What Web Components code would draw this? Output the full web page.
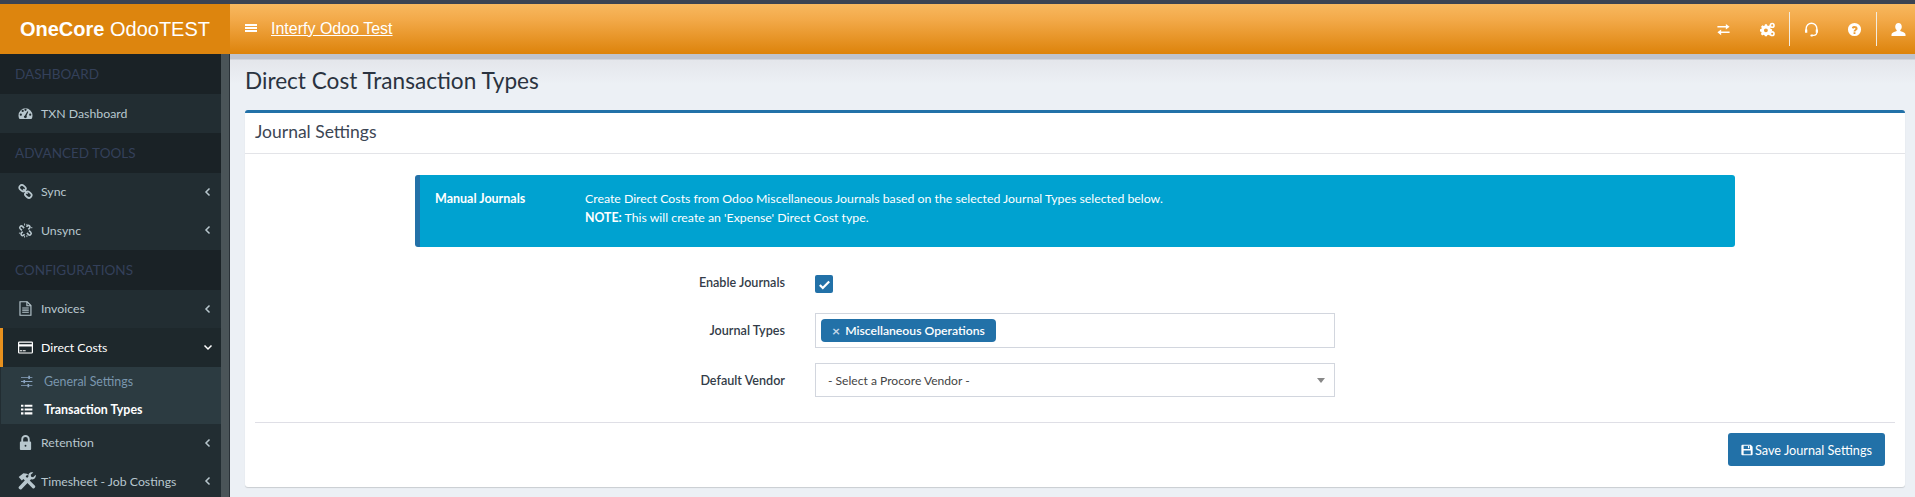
<!DOCTYPE html>
<html>
<head>
<meta charset="utf-8">
<title>Direct Cost Transaction Types</title>
<style>
html, body { margin: 0; height: 100%; overflow: hidden; background: #ecf0f5; }
body { font-family: Lato, "Noto Sans", sans-serif; }
</style>
</head>
<body>
<app-shell>
    <top-bar slot="top"></top-bar>
    <side-bar slot="side">
        <nav-head>DASHBOARD</nav-head>
        <nav-item icon="gauge" h="39">TXN Dashboard</nav-item>
        <nav-head>ADVANCED TOOLS</nav-head>
        <nav-item icon="link" arrow="left" h="38">Sync</nav-item>
        <nav-item icon="unlink" arrow="left" h="39">Unsync</nav-item>
        <nav-head>CONFIGURATIONS</nav-head>
        <nav-item icon="file" arrow="left" h="38">Invoices</nav-item>
        <nav-item icon="card" arrow="down" h="39" active>Direct Costs</nav-item>
        <nav-sub icon="sliders">General Settings</nav-sub>
        <nav-sub icon="list" current>Transaction Types</nav-sub>
        <nav-item icon="lock" arrow="left" h="38">Retention</nav-item>
        <nav-item icon="tools" size="18" arrow="left" h="39">Timesheet - Job Costings</nav-item>
    </side-bar>
    <page-title>Direct Cost Transaction Types</page-title>
    <settings-box heading="Journal Settings">
        <call-out heading="Manual Journals">
            Create Direct Costs from Odoo Miscellaneous Journals based on the selected Journal Types selected below.<br>
            <b>NOTE:</b> This will create an 'Expense' Direct Cost type.
        </call-out>
        <form-row label="Enable Journals" h="32"><check-box></check-box></form-row>
        <form-row label="Journal Types" h="35"><tag-input>Miscellaneous Operations</tag-input></form-row>
        <form-row label="Default Vendor" h="34"><select-input>- Select a Procore Vendor -</select-input></form-row>
        <save-button slot="footer">Save Journal Settings</save-button>
    </settings-box>
</app-shell>

<script>
const ICONS = {
    bars: '<path d="M2 4h12v2H2zM2 7h12v2H2zM2 10h12v2H2z" fill="currentColor"/>',
    gauge: '<path fill="currentColor" fill-rule="evenodd" d="M8 2.500a7.500 7.500 0 0 0-7.500 7.500c0 1.500.4 2.800 1.100 3.900h12.800c.7-1.100 1.100-2.400 1.100-3.900A7.500 7.500 0 0 0 8 2.500zM3 10.500a1.200 1.200 0 1 1 0-2.400 1.200 1.200 0 0 1 0 2.400zM5 6.500a1.200 1.200 0 1 1 0-2.400 1.200 1.200 0 0 1 0 2.400zM8 5.300a1.200 1.200 0 1 1 0-2.400 1.200 1.200 0 0 1 0 2.400zM13 10.500a1.200 1.200 0 1 1 0-2.400 1.200 1.200 0 0 1 0 2.400zM9.400 11.500a1.600 1.600 0 0 1-3 .6 1.600 1.600 0 0 1 1-2.100l2.600-4.500 1 .5-1.900 4.500c.2.500.4.900.3 1z"/>',
    link: '<g fill="none" stroke="currentColor" stroke-width="1.900"><rect x="1.200" y="1.600" width="7.200" height="5.600" rx="2.600" transform="rotate(42 4.800 4.400)"/><rect x="7.400" y="8.600" width="7.200" height="5.600" rx="2.600" transform="rotate(42 11 11.400)"/><path d="M5.600 5.400l4.600 5"/></g>',
    unlink: '<g fill="none" stroke="currentColor" stroke-width="1.700"><path d="M6.500 5.500L4.800 3.600c-1.700-1.500-3.900.9-2.400 2.500l1.800 1.700M9.500 10.500l1.700 1.900c1.700 1.500 3.900-.9 2.400-2.500L11.800 8.200M5 9.200l-1.400 1.500c-1.200 1.600.8 3.500 2.300 2.300L7 12M11 6.800l1.400-1.500c1.200-1.600-.8-3.500-2.300-2.300L9 4"/><path d="M7 .5v2.200M9.500 1v1.800M1 10.800h1.500M13.500 5h1.800M7 13.500v2M9.500 13v2" stroke-width="1"/></g>',
    file: '<g fill="none" stroke="currentColor" stroke-width="1.200"><path d="M2.100.8h7.700l4 4v10.400H2.100z"/><path d="M9.500.8v4.300h4.300M4.500 7.500h7M4.500 9.700h7M4.500 12h7"/></g>',
    card: '<path fill="currentColor" fill-rule="evenodd" d="M1.500 1.500h13a1.500 1.500 0 0 1 1.500 1.500v10a1.500 1.500 0 0 1-1.500 1.500h-13A1.500 1.500 0 0 1 0 13V3a1.500 1.500 0 0 1 1.500-1.500zM1.300 4.500h13.400V3q0-.2-.2-.2h-13q-.2 0-.2.200zM1.300 7v6q0 .2.2.2h13q.2 0 .2-.2V7zM2 11h2.500v1H2zM5.200 11h3v1h-3z"/>',
    sliders: '<path fill="currentColor" d="M0 2.500h9V1h2v1.500h3v1h-3V5H9V3.500H0zM0 7.500h3V6h2v1.500h9v1H5V10H3V8.500H0zM0 12.500h8V11h2v1.500h4v1h-4V15H8v-1.500H0z"/>',
    list: '<path fill="currentColor" d="M0 2h3v2.600H0zM4.500 2H14v2.600H4.500zM0 6.700h3v2.600H0zM4.500 6.700H14v2.600H4.500zM0 11.400h3V14H0zM4.500 11.400H14V14H4.500z"/>',
    lock: '<path fill="currentColor" fill-rule="evenodd" d="M3.500 7V4.500a4.500 4.500 0 0 1 9 0V7h.500A1 1 0 0 1 14 8v7a1 1 0 0 1-1 1H3a1 1 0 0 1-1-1V8a1 1 0 0 1 1-1zM5.500 7h5V4.500a2.500 2.500 0 0 0-5 0z"/><circle cx="8" cy="11.500" r="1" fill="#222d32"/>',
    tools: '<g fill="currentColor"><path d="M.6 4.500L4.800 1l3.200.5 1.400 1.100-1.700.2-.9 1.200 8.300 8.300q.6.700 0 1.400l-.7.700q-.7.600-1.400 0L4.800 6.300 3.400 7.500z"/><path d="M15.800 2.500l-2.400 2.200-1.700-.5-.4-1.700L13.600.4c-1.300-.5-2.900-.1-3.800 1-.6.800-.8 1.700-.5 2.700L.8 13.100q-.6.800 0 1.500l.8.800q.8.500 1.500-.1l8.500-8.800c1 .3 2 .1 2.900-.6 1.100-.9 1.600-2.400 1.300-3.400z"/></g>',
    exchange: '<path fill="currentColor" d="M1.500 4.200h9V2l4 3-4 3V5.800h-9zM14.500 10.200h-9V8l-4 3 4 3v-2.200h9z"/>',
    gears: '<g fill="currentColor"><path fill-rule="evenodd" d="M5.200 3.500h2.200l.3 1.500 1.200.5 1.300-.8 1.500 1.500-.8 1.300.5 1.200 1.500.3v2.200l-1.500.3-.5 1.200.8 1.300-1.500 1.500-1.300-.8-1.200.5-.3 1.300H5.200l-.3-1.300-1.200-.5-1.300.8-1.500-1.500.8-1.300-.5-1.200L0 11.200V9l1.400-.3.5-1.200-.8-1.300 1.500-1.500 1.300.8 1.200-.5zM6.300 8a2.100 2.100 0 1 0 0 4.200 2.100 2.100 0 0 0 0-4.200z" transform="translate(0 -1.200)"/><path fill-rule="evenodd" d="M13 .8a2.800 2.800 0 1 0 0 5.600 2.800 2.800 0 0 0 0-5.600zm0 1.700a1.100 1.100 0 1 1 0 2.200 1.100 1.100 0 0 1 0-2.200z"/><path fill-rule="evenodd" d="M13 10.500a2.800 2.800 0 1 0 0 5.600 2.800 2.800 0 0 0 0-5.600zm0 1.700a1.100 1.100 0 1 1 0 2.200 1.100 1.100 0 0 1 0-2.200z" transform="translate(0 -.8)"/></g>',
    headset: '<g fill="none" stroke="currentColor"><path d="M2.300 10V7a5.700 5.700 0 0 1 11.400 0V10" stroke-width="1.500"/><path d="M2.300 8v3.500M13.700 8v3.500" stroke-width="2.400"/><path d="M13.700 11c0 2-1.500 3.300-3.500 3.300H8.500" stroke-width="1.300"/></g><rect x="6.800" y="13.200" width="2.800" height="2.200" rx=".8" fill="currentColor"/>',
    help: '<path fill="currentColor" fill-rule="evenodd" d="M8 1a7 7 0 1 1 0 14A7 7 0 0 1 8 1zM7 11v1.800h2V11zM5.300 6.400l1.500.9c.2-.6.600-1 1.200-1 .6 0 1 .3 1 .8 0 .9-2 1-2 2.900h2c0-1 2.300-1.200 2.300-3.200 0-1.700-1.500-2.600-3.200-2.600-1.300 0-2.200.6-2.800 1.200z"/>',
    user: '<path fill="currentColor" d="M8 1c2.100 0 3.500 1.800 3.500 4 0 1.500-.7 2.800-1.600 3.500-.2.900.2 1.200 1.300 1.600 2.200.8 4.300 1.400 4.300 3.400v1.500H.5v-1.500c0-2 2.100-2.600 4.300-3.400 1.100-.4 1.500-.7 1.300-1.600C5.200 7.800 4.500 6.500 4.500 5c0-2.200 1.400-4 3.500-4z"/>',
    save: '<path fill="currentColor" fill-rule="evenodd" d="M1.500 1h11L15 3.500v10a1.500 1.500 0 0 1-1.500 1.500h-12A1.500 1.500 0 0 1 0 13.500v-11A1.500 1.500 0 0 1 1.500 1zM3 2.200v4.300h8.500V2.200zM8.800 2.800h1.700v3H8.800zM3 8.500v5.300h9.500V8.500z" transform="translate(.5 0)"/>',
    check: '<path d="M3 8.500l3.200 3.200L13 4.800" fill="none" stroke="currentColor" stroke-width="2.400"/>'
};

const icon = (name, size) => `<svg width="${size}" height="${size}" viewBox="0 0 16 16" aria-hidden="true">${ICONS[name]}</svg>`;

class AppShell extends HTMLElement {
    constructor() {
        super();
        this.attachShadow({ mode: 'open' });
        this.shadowRoot.innerHTML = `
            <style>
                :host { display: grid; grid-template: 54px 1fr / 230px 1fr; height: 497px; overflow: hidden; }
                .top { grid-column: 1 / 3; }
                .main { padding: 0 10px 0 15px; background: linear-gradient(#bfc3ce 0, #bfc3ce 5px, #e4e6eb 6px, #ecf0f5 30px); min-width: 0; }
            </style>
            <div class="top"><slot name="top"></slot></div>
            <slot name="side"></slot>
            <div class="main"><slot></slot></div>
        `;
    }
}

class TopBar extends HTMLElement {
    constructor() {
        super();
        this.attachShadow({ mode: 'open' });
        const tool = (n, w, sep, extra) => `<span class="tool ${sep ? 'sep' : ''}" style="width:${w}px;${extra || ''}">${icon(n, 15)}</span>`;
        this.shadowRoot.innerHTML = `
            <style>
                :host { display: block; height: 54px; background: #3b4352; padding-top: 4px; box-sizing: border-box; font-family: "Liberation Sans", sans-serif; color: #fff; }
                .bar { display: flex; height: 50px; background: linear-gradient(#f8b85f, #f3aa4a 30%, #dd830b); }
                .logo { width: 230px; background: #dd850e; font-size: 20px; line-height: 50px; text-align: center; box-sizing: border-box; flex: none; }
                .logo b { font-weight: 700; }
                .burger { display: flex; align-items: center; padding: 0 11px 0 13px; width: 17px; box-sizing: content-box; margin-top: -2px; }
                a { color: #fff; font-size: 16px; line-height: 50px; }
                .tools { margin-left: auto; display: flex; height: 34px; align-self: center; }
                .tool { display: flex; align-items: center; justify-content: center; box-sizing: border-box; }
                .sep { border-right: 1px solid #f3ecdf; }
            </style>
            <div class="bar">
                <div class="logo"><b>OneCore</b> OdooTEST</div>
                <span class="burger">${icon('bars', 16)}</span>
                <a href="#" onclick="return false">Interfy Odoo Test</a>
                <div class="tools">
                    ${tool('exchange', 44)}${tool('gears', 45, true)}${tool('headset', 43)}${tool('help', 43)}<span class="tool sep" style="width:1px"></span>${tool('user', 38, false, 'padding-left:4px')}
                </div>
            </div>
        `;
    }
}

class SideBar extends HTMLElement {
    constructor() {
        super();
        this.attachShadow({ mode: 'open' });
        this.shadowRoot.innerHTML = `
            <style>
                :host { display: flex; background: #222d32; border-right: 1px solid #2a3238; box-sizing: border-box; overflow: hidden; }
                .menu { flex: 1; min-width: 0; }
                .scroll { width: 8px; flex: none; background: #4a5458; }
            </style>
            <div class="menu"><slot></slot></div>
            <div class="scroll"></div>
        `;
    }
}

class NavHead extends HTMLElement {
    constructor() {
        super();
        this.attachShadow({ mode: 'open' });
        this.shadowRoot.innerHTML = `
            <style>
                :host { display: block; height: 40px; line-height: 40px; padding-left: 15px; background: #1a2226; color: #34405a; font-size: 13.500px; }
            </style>
            <slot></slot>
        `;
    }
}

class NavItem extends HTMLElement {
    constructor() {
        super();
        this.attachShadow({ mode: 'open' });
        const active = this.hasAttribute('active');
        const arrow = this.getAttribute('arrow');
        const size = this.getAttribute('size') || 15;
        const path = arrow === 'down' ? 'M1.500 3.500L5 7l3.500-3.500' : 'M6.500 1.500L3 5l3.500 3.500';
        this.shadowRoot.innerHTML = `
            <style>
                :host { display: flex; align-items: center; height: ${this.getAttribute('h')}px; font-size: 12.300px; color: ${active ? '#fff' : '#b8c7ce'}; background: ${active ? '#1e282c' : '#222d32'}; border-left: 3px solid ${active ? '#e8911e' : 'transparent'}; box-sizing: border-box; padding: 0 8px 1px 0; }
                .ic { width: 15px; margin-left: 15px; margin-right: 8px; display: flex; color: ${active ? '#fff' : '#b8c7ce'}; }
                .ic svg { flex: none; }
                .txt { flex: 1; white-space: nowrap; }
                .ar { display: flex; }
            </style>
            <span class="ic">${icon(this.getAttribute('icon'), size)}</span>
            <span class="txt"><slot></slot></span>
            ${arrow ? `<span class="ar"><svg width="10" height="10" viewBox="0 0 10 10"><path d="${path}" fill="none" stroke="currentColor" stroke-width="1.500"/></svg></span>` : ''}
        `;
    }
}

class NavSub extends HTMLElement {
    constructor() {
        super();
        this.attachShadow({ mode: 'open' });
        const current = this.hasAttribute('current');
        this.shadowRoot.innerHTML = `
            <style>
                :host { display: flex; align-items: center; height: 28.500px; font-size: 12.400px; color: ${current ? '#fff' : '#7a96ad'}; background: #2c3b41; margin-left: 1px; padding-left: 20px; font-weight: ${current ? 700 : 400}; }
                .ic { width: 13px; margin-right: 10px; display: flex; color: ${current ? '#fff' : '#8aa4c0'}; }
            </style>
            <span class="ic">${icon(this.getAttribute('icon'), 13)}</span>
            <slot></slot>
        `;
    }
}

class PageTitle extends HTMLElement {
    constructor() {
        super();
        this.attachShadow({ mode: 'open' });
        this.shadowRoot.innerHTML = `
            <style>
                :host { display: block; height: 56px; line-height: 54px; font-size: 22.600px; color: #2a3340; box-sizing: border-box; }
            </style>
            <slot></slot>
        `;
    }
}

class SettingsBox extends HTMLElement {
    constructor() {
        super();
        this.attachShadow({ mode: 'open' });
        this.shadowRoot.innerHTML = `
            <style>
                :host { display: block; height: 377px; box-sizing: border-box; background: #fff; border-top: 3px solid #2271a8; border-radius: 3px; box-shadow: 0 1px 1px rgba(0,0,0,.15); }
                .head { height: 41px; line-height: 38px; padding-left: 10px; font-size: 17.500px; color: #3c4654; border-bottom: 1px solid #e3e4e8; box-sizing: border-box; }
                .body { padding: 21px 10px 0; height: 268px; box-sizing: border-box; }
                .foot { margin: 0 10px; border-top: 1px solid #dfdfe6; padding: 10px 10px 0 0; display: flex; justify-content: flex-end; }
            </style>
            <div class="head">${this.getAttribute('heading')}</div>
            <div class="body"><slot></slot></div>
            <div class="foot"><slot name="footer"></slot></div>
        `;
    }
}

class CallOut extends HTMLElement {
    constructor() {
        super();
        this.attachShadow({ mode: 'open' });
        this.shadowRoot.innerHTML = `
            <style>
                :host { display: flex; width: 1320px; height: 72px; margin: 0 auto 19px; box-sizing: border-box; padding: 14px 15px; background: #00a2d0; border-left: 5px solid #2271a8; border-radius: 3px; color: #fff; font-size: 12.300px; line-height: 19px; }
                .t { width: 150px; font-weight: 700; flex: none; font-size: 12.500px; }
            </style>
            <div class="t">${this.getAttribute('heading')}</div>
            <div><slot></slot></div>
        `;
    }
}

class FormRow extends HTMLElement {
    constructor() {
        super();
        this.attachShadow({ mode: 'open' });
        this.shadowRoot.innerHTML = `
            <style>
                :host { display: grid; grid-template-columns: 515px 520px; column-gap: 30px; align-items: center; min-height: ${this.getAttribute('h')}px; margin-bottom: 15px; margin-left: 15px; font-size: 12.600px; color: #333c48; }
                label { text-align: right; font-weight: 600; }
            </style>
            <label>${this.getAttribute('label')}</label>
            <div><slot></slot></div>
        `;
    }
}

class CheckBox extends HTMLElement {
    constructor() {
        super();
        this.attachShadow({ mode: 'open' });
        this.shadowRoot.innerHTML = `
            <style>
                :host { display: flex; align-items: center; justify-content: center; width: 18px; height: 18px; margin-top: 4px; background: #2271a8; border-radius: 2px; color: #fff; }
            </style>
            ${icon('check', 15)}
        `;
    }
}

class TagInput extends HTMLElement {
    constructor() {
        super();
        this.attachShadow({ mode: 'open' });
        this.shadowRoot.innerHTML = `
            <style>
                :host { display: flex; align-items: center; height: 35px; box-sizing: border-box; border: 1px solid #d2d6de; padding-left: 5px; }
                .tag { display: flex; align-items: center; height: 23px; padding: 0 11px; background: #2271a8; color: #fff; border-radius: 4px; font-size: 12.200px; font-weight: 600; }
                .x { color: #c4d8e8; margin-right: 5px; font-size: 14px; font-weight: 700; }
            </style>
            <span class="tag"><span class="x">×</span><slot></slot></span>
        `;
    }
}

class SelectInput extends HTMLElement {
    constructor() {
        super();
        this.attachShadow({ mode: 'open' });
        this.shadowRoot.innerHTML = `
            <style>
                :host { display: flex; align-items: center; justify-content: space-between; height: 34px; box-sizing: border-box; border: 1px solid #d2d6de; padding: 0 9px 0 12px; font-size: 12.100px; color: #444; }
                .caret { width: 0; height: 0; border: 4px solid transparent; border-top: 5px solid #888; border-bottom: 0; }
            </style>
            <span><slot></slot></span>
            <span class="caret"></span>
        `;
    }
}

class SaveButton extends HTMLElement {
    constructor() {
        super();
        this.attachShadow({ mode: 'open' });
        this.shadowRoot.innerHTML = `
            <style>
                :host { display: flex; align-items: center; justify-content: center; gap: 2px; width: 157px; height: 33px; background: #2271a8; color: #fff; border-radius: 3px; font-size: 12.700px; box-sizing: border-box; }
                svg { flex: none; }
            </style>
            ${icon('save', 12)}<slot></slot>
        `;
    }
}

customElements.define('app-shell', AppShell);
customElements.define('top-bar', TopBar);
customElements.define('side-bar', SideBar);
customElements.define('nav-head', NavHead);
customElements.define('nav-item', NavItem);
customElements.define('nav-sub', NavSub);
customElements.define('page-title', PageTitle);
customElements.define('settings-box', SettingsBox);
customElements.define('call-out', CallOut);
customElements.define('form-row', FormRow);
customElements.define('check-box', CheckBox);
customElements.define('tag-input', TagInput);
customElements.define('select-input', SelectInput);
customElements.define('save-button', SaveButton);
</script>
</body>
</html>
